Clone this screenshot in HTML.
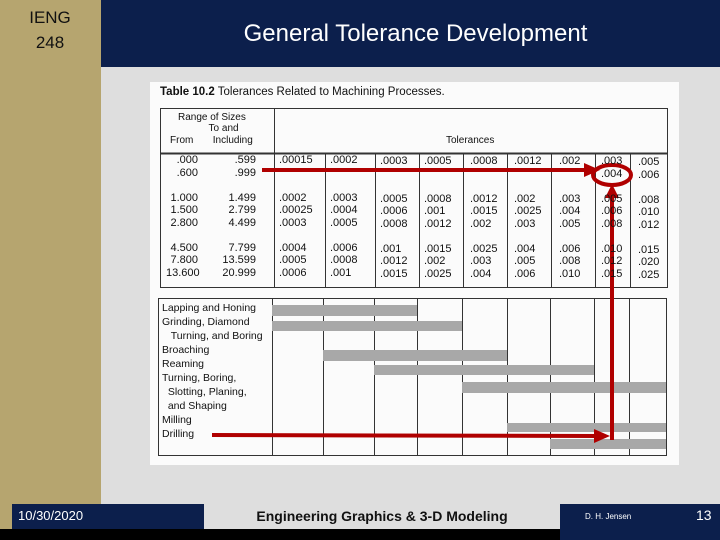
<!DOCTYPE html>
<html><head><meta charset="utf-8"><style>
*{margin:0;padding:0;box-sizing:border-box}
body{width:720px;height:540px;position:relative;overflow:hidden;background:#dedede;font-family:"Liberation Sans",sans-serif}
.a{position:absolute}
.t{position:absolute;font-size:11px;color:#111;white-space:nowrap;line-height:12px}
</style></head><body>
<div class="a" style="left:0;top:0;width:101px;height:540px;background:#b6a56f"></div>
<div class="a" style="left:0;top:5px;width:100px;text-align:center;font-size:17px;line-height:25px;color:#111">IENG<br>248</div>
<div class="a" style="left:101px;top:0;width:619px;height:67px;background:#0c1f4c"></div>
<div class="a" style="left:106px;top:20px;width:619px;text-align:center;font-size:24px;color:#fff">General Tolerance Development</div>

<div class="a" style="left:150px;top:82px;width:529px;height:383px;background:#fbfbfb"></div>
<svg class="a" style="left:0;top:0" width="720" height="540">
<g stroke="#333" stroke-width="1" fill="none">
<rect x="160.5" y="108.5" width="507" height="179"/>
<line x1="160" y1="153.5" x2="668" y2="153.5" stroke-width="2"/>
<line x1="274.5" y1="108" x2="274.5" y2="287"/>
<line x1="325.5" y1="153" x2="325.5" y2="287"/>
<line x1="375.5" y1="153" x2="375.5" y2="287"/>
<line x1="419.5" y1="153" x2="419.5" y2="287"/>
<line x1="463.5" y1="153" x2="463.5" y2="287"/>
<line x1="507.5" y1="153" x2="507.5" y2="287"/>
<line x1="551.5" y1="153" x2="551.5" y2="287"/>
<line x1="595.5" y1="153" x2="595.5" y2="287"/>
<line x1="630.5" y1="153" x2="630.5" y2="287"/>
<rect x="158.5" y="298.5" width="508" height="157"/>
<line x1="272.5" y1="298" x2="272.5" y2="455"/>
<line x1="323.5" y1="298" x2="323.5" y2="455"/>
<line x1="374.5" y1="298" x2="374.5" y2="455"/>
<line x1="417.5" y1="298" x2="417.5" y2="455"/>
<line x1="462.5" y1="298" x2="462.5" y2="455"/>
<line x1="507.5" y1="298" x2="507.5" y2="455"/>
<line x1="550.5" y1="298" x2="550.5" y2="455"/>
<line x1="594.5" y1="298" x2="594.5" y2="455"/>
<line x1="629.5" y1="298" x2="629.5" y2="455"/>
</g>
<g fill="#a8a8a8">
<rect x="272" y="305" width="145" height="11"/>
<rect x="272" y="321" width="190" height="10"/>
<rect x="323" y="350" width="184" height="11"/>
<rect x="374" y="365" width="220" height="10"/>
<rect x="462" y="382" width="204" height="11"/>
<rect x="507" y="423" width="159" height="9"/>
<rect x="550" y="439" width="116" height="10"/>
</g>
<g stroke="#b00000" stroke-width="4" fill="none">
<line x1="262" y1="170" x2="588" y2="170"/>
<ellipse cx="612" cy="175" rx="19" ry="10"/>
<line x1="612" y1="192" x2="612" y2="440"/>
<line x1="212" y1="435" x2="598" y2="436"/>
</g>
<g fill="#b00000">
<polygon points="600,170 584,163 584,177"/>
<polygon points="612,184 605,198 619,198"/>
<polygon points="610,436 594,429 594,443"/>
</g>
</svg>
<div class="t" style="left:160px;top:86px;font-size:11.5px"><b>Table 10.2</b> Tolerances Related to Machining Processes.</div>
<div class="t" style="left:178px;top:112px;line-height:11px;font-size:10px">Range of Sizes<br>&nbsp;&nbsp;&nbsp;&nbsp;&nbsp;&nbsp;&nbsp;&nbsp;&nbsp;&nbsp;&nbsp;To and</div>
<div class="t" style="left:170px;top:135px;font-size:10px">From &nbsp;&nbsp;&nbsp;&nbsp;&nbsp;&nbsp;Including</div>
<div class="t" style="left:446px;top:135px;font-size:10px">Tolerances</div>
<div class="t" style="left:166px;top:154px;text-align:right;width:32px;line-height:12.5px">.000<br>.600<br><br>1.000<br>1.500<br>2.800<br><br>4.500<br>7.800<br>13.600</div>
<div class="t" style="left:220px;top:154px;text-align:right;width:36px;line-height:12.5px">.599<br>.999<br><br>1.499<br>2.799<br>4.499<br><br>7.799<br>13.599<br>20.999</div>
<div class="t" style="left:279px;top:154px;line-height:12.5px">.00015<br>&nbsp;<br><br>.0002<br>.00025<br>.0003<br><br>.0004<br>.0005<br>.0006</div>
<div class="t" style="left:330px;top:154px;line-height:12.5px">.0002<br>&nbsp;<br><br>.0003<br>.0004<br>.0005<br><br>.0006<br>.0008<br>.001</div>
<div class="t" style="left:380px;top:155px;line-height:12.5px">.0003<br>&nbsp;<br><br>.0005<br>.0006<br>.0008<br><br>.001<br>.0012<br>.0015</div>
<div class="t" style="left:424px;top:155px;line-height:12.5px">.0005<br>&nbsp;<br><br>.0008<br>.001<br>.0012<br><br>.0015<br>.002<br>.0025</div>
<div class="t" style="left:470px;top:155px;line-height:12.5px">.0008<br>&nbsp;<br><br>.0012<br>.0015<br>.002<br><br>.0025<br>.003<br>.004</div>
<div class="t" style="left:514px;top:155px;line-height:12.5px">.0012<br>&nbsp;<br><br>.002<br>.0025<br>.003<br><br>.004<br>.005<br>.006</div>
<div class="t" style="left:559px;top:155px;line-height:12.5px">.002<br>&nbsp;<br><br>.003<br>.004<br>.005<br><br>.006<br>.008<br>.010</div>
<div class="t" style="left:601px;top:155px;line-height:12.5px">.003<br>.004<br><br>.005<br>.006<br>.008<br><br>.010<br>.012<br>.015</div>
<div class="t" style="left:638px;top:156px;line-height:12.5px">.005<br>.006<br><br>.008<br>.010<br>.012<br><br>.015<br>.020<br>.025</div>
<div class="t" style="left:162px;top:301px;font-size:10.5px;line-height:14px">Lapping and Honing<br>Grinding, Diamond<br>&nbsp;&nbsp;&nbsp;Turning, and Boring<br>Broaching<br>Reaming<br>Turning, Boring,<br>&nbsp;&nbsp;Slotting, Planing,<br>&nbsp;&nbsp;and Shaping<br>Milling<br>Drilling</div>

<div class="a" style="left:12px;top:504px;width:192px;height:25px;background:#0c1f4c"></div>
<div class="a" style="left:18px;top:508px;font-size:13px;color:#fff">10/30/2020</div>
<div class="a" style="left:204px;top:508px;width:356px;text-align:center;font-size:14px;font-weight:bold;color:#111">Engineering Graphics &amp; 3-D Modeling</div>
<div class="a" style="left:0;top:529px;width:560px;height:11px;background:#000"></div>
<div class="a" style="left:560px;top:504px;width:160px;height:36px;background:#0c1f4c"></div>
<div class="a" style="left:585px;top:512px;font-size:8px;color:#fff">D. H. Jensen</div>
<div class="a" style="left:696px;top:507px;font-size:14px;color:#fff">13</div>
</body></html>
